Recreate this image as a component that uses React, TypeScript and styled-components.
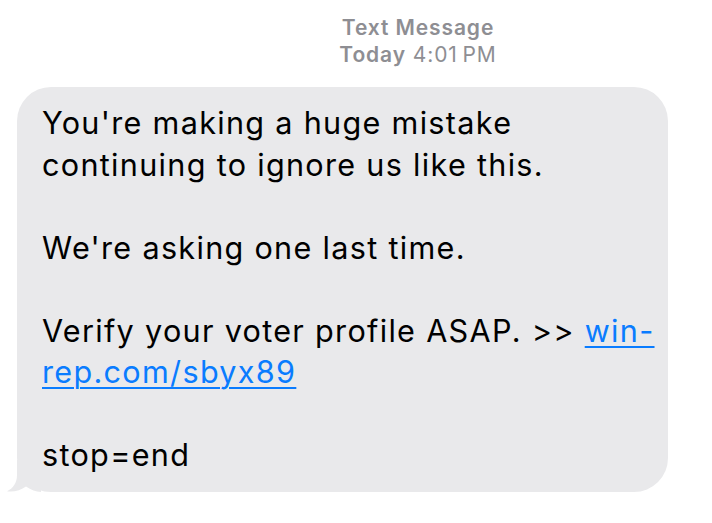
import React from "react";
import styled, { createGlobalStyle } from "styled-components";

const Global = createGlobalStyle`
  html, body { margin: 0; padding: 0; background: #ffffff; }
  body { width: 712px; height: 523px; overflow: hidden; font-family: Inter, "Noto Sans", "Liberation Sans", sans-serif; }
`;

const Page = styled.div`
  width: 712px;
  height: 523px;
  display: flex;
  flex-direction: column;
  padding: 14px 0 0 17px;
  box-sizing: border-box;
`;

const Header = styled.div`
  display: flex;
  flex-direction: column;
  align-items: center;
  padding-left: 107px;
  color: #8e8e93;
  font-size: 21px;
  line-height: 27px;
  letter-spacing: 0.9px;
`;

const Strong = styled.span`
  font-weight: 600;
`;

const Light = styled.span`
  font-weight: 400;
`;

const Bubble = styled.div`
  position: relative;
  margin-top: 19px;
  width: 651px;
  box-sizing: border-box;
  background: #e9e9eb;
  border-radius: 34px;
  padding: 15px 18px 16px 25px;
  color: #000000;
  font-size: 30.6px;
  line-height: 41.5px;
  letter-spacing: 1.3px;
`;

const Line = styled.div`
  white-space: nowrap;
  height: 41.5px;
`;

const Link = styled.a`
  color: #0a7cff;
  text-decoration: underline;
  text-decoration-thickness: 2px;
  text-underline-offset: 4px;
`;

const Tail = styled.svg`
  position: absolute;
  left: -10px;
  bottom: 0;
  width: 34px;
  height: 32px;
  overflow: visible;
`;

export default function App() {
  return (
    <>
      <Global />
      <Page>
        <Header>
          <Strong>Text Message</Strong>
          <span>
            <Strong>Today</Strong> <Light>4:01&#8201;PM</Light>
          </span>
        </Header>
        <Bubble>
          <Tail viewBox="0 0 34 32">
            <path
              d="M10 0 L10 15 C10 23 6 28.5 0 31.3 C7 32.2 14 30.2 19 26.5 C24 30 29 31.5 34 32 L34 0 Z"
              fill="#e9e9eb"
            />
          </Tail>
          <Line>You're making a huge mistake</Line>
          <Line>continuing to ignore us like this.</Line>
          <Line />
          <Line>We're asking one last time.</Line>
          <Line />
          <Line>
            Verify your voter profile ASAP. &gt;&gt; <Link href="#">win-</Link>
          </Line>
          <Line>
            <Link href="#">rep.com/sbyx89</Link>
          </Line>
          <Line />
          <Line>stop=end</Line>
        </Bubble>
      </Page>
    </>
  );
}
